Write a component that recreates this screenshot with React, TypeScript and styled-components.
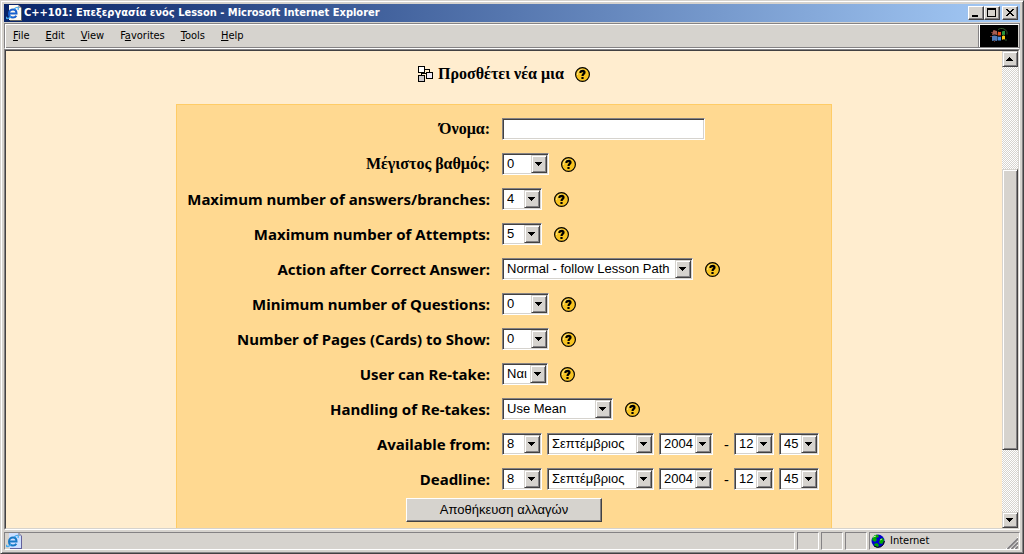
import React from 'react';
import styled, { createGlobalStyle, css } from 'styled-components';

const c = {
  face: '#d6d3ce',
  shadow: '#848284',
  dark: '#424142',
  page: '#ffedcf',
  form: '#ffd991',
  formBorder: '#ffcc66',
};

const uiFont = css`
  font-family: 'DejaVu Sans Condensed', 'DejaVu Sans', sans-serif;
  font-size: 11px;
  line-height: 14px;
`;

const raised = css`
  border: 1px solid;
  border-color: ${c.face} ${c.dark} ${c.dark} ${c.face};
  box-shadow: inset 1px 1px 0 #fff, inset -1px -1px 0 ${c.shadow};
  background: ${c.face};
`;

const sunken = css`
  border: 1px solid;
  border-color: ${c.shadow} #fff #fff ${c.shadow};
`;

const GlobalStyle = createGlobalStyle`
  *, *::before, *::after { box-sizing: border-box; }
  body { margin: 0; background: ${c.face}; color: #000; }
  button { color: #000; }
  svg { display: block; flex: none; }
`;

const Window = styled.div`
  display: flex;
  flex-direction: column;
  height: 100vh;
  padding: 3px;
  ${raised}
`;

const TitleBar = styled.header`
  ${uiFont}
  display: flex;
  align-items: center;
  height: 18px;
  padding: 0 2px;
  background: linear-gradient(to right, #082468, #a5cbf7);
  color: #fff;
`;

const Title = styled.h1`
  flex: 1;
  margin: 0 0 0 2px;
  font-size: 11px;
  font-weight: bold;
  white-space: nowrap;
  overflow: hidden;
`;

const WindowButton = styled.button<{ $apart?: boolean }>`
  ${raised}
  border-color: #fff ${c.dark} ${c.dark} #fff;
  box-shadow: inset -1px -1px 0 ${c.shadow};
  display: flex;
  width: 16px;
  height: 14px;
  padding: 0;
  margin-left: ${(p) => (p.$apart ? 2 : 0)}px;
`;

const MenuBar = styled.div`
  display: flex;
  height: 26px;
  margin-top: 1px;
  border: 1px solid;
  border-color: ${c.shadow} ${c.shadow} #fff ${c.shadow};
  box-shadow: inset 1px 1px 0 #fff, inset 0 -1px 0 ${c.shadow};
`;

const MenuItems = styled.nav`
  ${uiFont}
  display: flex;
  flex: 1;
  align-items: center;
`;

const MenuItem = styled.button`
  font: inherit;
  padding: 0 8px;
  border: 0;
  background: none;

  u { text-underline-offset: 1px; }
`;

const Throbber = styled.div`
  display: flex;
  align-items: center;
  justify-content: center;
  width: 39px;
  margin: 1px 1px 1px 0;
  border-left: 1px solid #fff;
  background: #000;
  box-shadow: -1px 0 0 ${c.shadow};
`;

const Viewport = styled.div`
  display: flex;
  flex: 1;
  min-height: 0;
  border: 1px solid;
  border-color: ${c.shadow} #fff #fff ${c.shadow};
`;

const ViewportInner = styled.div`
  display: flex;
  flex: 1;
  min-width: 0;
  border: 1px solid;
  border-color: ${c.dark} ${c.face} ${c.face} ${c.dark};
`;

const Page = styled.main`
  flex: 1;
  min-width: 0;
  overflow: hidden;
  background: ${c.page};
`;

const Heading = styled.h2`
  display: flex;
  align-items: center;
  justify-content: center;
  gap: 5px;
  margin: 0;
  padding: 13px 0 20px;
  font: bold 16px/20px 'Liberation Serif', serif;
`;

const HelpButton = styled.button<{ $gap: number }>`
  margin-left: ${(p) => p.$gap}px;
  padding: 0;
  border: 0;
  background: none;
`;

const Form = styled.form`
  width: 656px;
  max-width: 100%;
  margin: 0 auto;
  padding: 13px 0 20px;
  border: 1px solid ${c.formBorder};
  background: ${c.form};
`;

const Row = styled.div`
  display: grid;
  grid-template-columns: 313px 1fr;
  column-gap: 12px;
  align-items: center;
  height: 22px;
  margin-bottom: 13px;

  &:last-of-type { margin-bottom: 8px; }
`;

const RowLabel = styled.label<{ $serif?: boolean }>`
  text-align: right;
  white-space: nowrap;
  font: ${(p) =>
    p.$serif ? "bold 16px/20px 'Liberation Serif', serif" : "bold 15px/20px 'Noto Sans', sans-serif"};
`;

const Cell = styled.div`
  display: flex;
  align-items: center;
  font: 15px/20px 'Noto Sans', sans-serif;
`;

const field = css`
  display: block;
  height: 22px;
  border: 1px solid;
  border-color: ${c.shadow} #fff #fff ${c.shadow};
  box-shadow: inset 1px 1px 0 ${c.dark}, inset -1px -1px 0 ${c.face};
  background: #fff;
  color: #000;
  font: 13px/18px 'Liberation Sans', sans-serif;
`;

const TextInput = styled.input`
  ${field}
  width: 203px;
  padding: 0 4px;
`;

const SelectBox = styled.span<{ $width: number }>`
  position: relative;
  width: ${(p) => p.$width}px;
  height: 22px;

  & + & { margin-left: 5px; }
`;

const NativeSelect = styled.select`
  ${field}
  appearance: none;
  width: 100%;
  padding: 0 18px 0 4px;
  border-radius: 0;
`;

const Drop = styled.span`
  ${raised}
  position: absolute;
  top: 2px;
  right: 2px;
  display: flex;
  align-items: center;
  justify-content: center;
  width: 16px;
  height: 18px;
  padding-right: 1px;
  pointer-events: none;
`;

const Dash = styled.span`
  width: 21px;
  padding-left: 11px;
`;

const Save = styled.button`
  ${raised}
  border-color: #fff ${c.dark} ${c.dark} #fff;
  box-shadow: inset -1px -1px 0 ${c.shadow};
  display: block;
  width: 196px;
  height: 24px;
  margin: 0 auto;
  font: 13px/16px 'Liberation Sans', sans-serif;
`;

const ScrollBar = styled.div`
  display: flex;
  flex-direction: column;
  width: 16px;
  background: repeating-conic-gradient(#fff 0 25%, ${c.face} 0 50%) 0 0 / 2px 2px;
`;

const ScrollButton = styled.button`
  ${raised}
  display: flex;
  align-items: center;
  justify-content: center;
  height: 16px;
  padding: 0 1px 0 0;
`;

const Track = styled.div`
  display: flex;
  flex: 1;
  flex-direction: column;
`;

const TrackSpace = styled.div<{ $share: number }>`
  flex: ${(p) => p.$share} 0 0;
`;

const Thumb = styled.div`
  ${raised}
  flex: 281 0 0;
`;

const StatusBar = styled.footer`
  ${uiFont}
  display: flex;
  gap: 2px;
  height: 20px;
  padding-top: 2px;
`;

const StatusPanel = styled.div<{ $width?: number }>`
  ${sunken}
  display: flex;
  align-items: center;
  gap: 5px;
  flex: ${(p) => (p.$width ? `0 0 ${p.$width}px` : '1')};
  padding: 0 1px;
`;

const PanelText = styled.span`
  flex: 1;
`;

const Grip = styled.svg`
  align-self: flex-end;
`;

const PageIcon = ({ pale }: { pale?: boolean }) => (
  <svg width="16" height="16" viewBox="0 0 16 16" aria-hidden="true">
    <path d="M4 0h9l3 3v13H4z" fill={pale ? '#63619c' : '#636563'} />
    <path d="M3 0h9l3 3v12H3z" fill={pale ? '#cedfff' : '#fffbf0'} />
    <path d="M12 0v3h3z" fill="#9ca6b5" />
    <path
      d="M3 8.5h7.5C10.5 5.500 9 4.500 7 4.500S3 6 3 8.500s1.700 4 4 4c1.600 0 2.700-.7 3.300-1.800"
      fill="none"
      stroke={pale ? '#1879c6' : '#1861ce'}
      strokeWidth="2"
    />
    <path d="M1 12C-1 14 2 14.500 5 11.500M8 4c3-2.500 5-2.500 4 1" fill="none" stroke="#42aaef" strokeWidth="1.200" />
  </svg>
);

const FlagIcon = () => (
  <svg width="20" height="18" viewBox="0 0 20 18" aria-hidden="true">
    <path d="M2 5h2v1H2zM4 3h2v1H4zM1 9h2v1H1zM3 12h2v1H3zM5 14h1v1H5z" fill="#6b3029" />
    <path d="M4 4q2-1 4 0v4q-2-1-5 0z" fill="#a55d52" />
    <path d="M3 9q2-1 5 0v5q-3-1-5 0z" fill="#5279b5" />
    <path d="M9 4.500q2 1 3 .2v3.500q-2 .5-3.500 0z" fill="#e75118" />
    <path d="M13 4.500q2-1 3-.5v4q-1.500-.5-3 .2z" fill="#29963c" />
    <path d="M8.500 9.200q2 1 3.500 .2v4q-2 .5-3.500-.2z" fill="#4a8ade" />
    <path d="M13 9.200q1.500-1 3-.3v3.600q-1.500-.5-3 .3z" fill="#f7cb18" />
    <path d="M9 2.500q5-3 9 2v3M17 12v2" fill="none" stroke="#30552c" strokeWidth="1" />
  </svg>
);

const HelpIcon = () => (
  <svg width="15" height="15" viewBox="0 0 15 15" aria-hidden="true">
    <circle cx="7.500" cy="7.500" r="6.900" fill="#f7c321" stroke="#000" strokeWidth="1.200" />
    <path d="M2.500 8C2.500 4.500 4.500 2.500 8 2.500" fill="none" stroke="#ffe784" strokeWidth="1" />
    <path d="M5.500 6V5C5.500 3.500 9.500 3.500 9.500 5.400C9.500 7 7.500 6.800 7.500 9" fill="none" stroke="#000" strokeWidth="2.200" />
    <path d="M6.400 10h2.200v2H6.400z" />
  </svg>
);

const LessonIcon = () => (
  <svg width="15" height="16" viewBox="0 0 15 16" shapeRendering="crispEdges" aria-hidden="true">
    <path d="M7 3h5v3h-1V4H7zM3 7h1v2H3zM4 7h4v1H4z" />
    <path d="M0 0h7v7H0zM8 6h7v7H8zM0 9h7v7H0z" />
    <path d="M1 1h5v5H1z" fill="#fff" />
    <path d="M9 7h5v5H9z" fill="#efebf7" />
    <path d="M1 10h5v5H1z" fill="#cecbce" />
  </svg>
);

const GlobeIcon = () => (
  <svg width="14" height="14" viewBox="0 0 14 14" aria-hidden="true">
    <circle cx="7" cy="7" r="6.500" fill="#0000ce" />
    <path d="M2 3Q4 0 7 1L8 3L5 4L6 6L4 8L1 6zM9 5l3-1 1 3-2 3-3-1zM3 10l3-1 2 2-1 2-3-1z" fill="#00aa00" />
    <path d="M2 3l3-1M9 6l2-1" stroke="#b5f7a5" />
    <path d="M13.400 7A6.400 6.400 0 0 1 3 12" fill="none" stroke="#000" />
  </svg>
);

const Arrow = ({ up }: { up?: boolean }) => (
  <svg width="7" height="4" viewBox="0 0 7 4" shapeRendering="crispEdges" aria-hidden="true">
    <path d={up ? 'M3 0h1v1h1v1h1v1h1v1H0V3h1V2h1V1h1z' : 'M0 0h7v1H6v1H5v1H4v1H3V3H2V2H1V1H0z'} />
  </svg>
);

const CaptionGlyph = ({ d }: { d: string }) => (
  <svg width="14" height="12" viewBox="0 0 14 12" shapeRendering="crispEdges" aria-hidden="true">
    <path d={d} fillRule="evenodd" />
  </svg>
);

interface SelectProps {
  id?: string;
  label?: string;
  value: string;
  width: number;
}

const Select = ({ id, label, value, width }: SelectProps) => (
  <SelectBox $width={width}>
    <NativeSelect id={id} aria-label={label} defaultValue={value}>
      <option>{value}</option>
    </NativeSelect>
    <Drop>
      <Arrow />
    </Drop>
  </SelectBox>
);

const Help = ({ gap = 12 }: { gap?: number }) => (
  <HelpButton type="button" aria-label="Help" $gap={gap}>
    <HelpIcon />
  </HelpButton>
);

const menus: [string, string, string][] = [
  ['', 'F', 'ile'],
  ['', 'E', 'dit'],
  ['', 'V', 'iew'],
  ['F', 'a', 'vorites'],
  ['', 'T', 'ools'],
  ['', 'H', 'elp'],
];

const settings = [
  { id: 'grade', label: 'Μέγιστος βαθμός:', value: '0', width: 47, serif: true },
  { id: 'answers', label: 'Maximum number of answers/branches:', value: '4', width: 40 },
  { id: 'attempts', label: 'Maximum number of Attempts:', value: '5', width: 40 },
  { id: 'action', label: 'Action after Correct Answer:', value: 'Normal - follow Lesson Path', width: 191 },
  { id: 'questions', label: 'Minimum number of Questions:', value: '0', width: 47 },
  { id: 'pages', label: 'Number of Pages (Cards) to Show:', value: '0', width: 47 },
  { id: 'retake', label: 'User can Re-take:', value: 'Ναι', width: 46 },
  { id: 'handling', label: 'Handling of Re-takes:', value: 'Use Mean', width: 111 },
];

const dates = [
  { id: 'available', label: 'Available from:' },
  { id: 'deadline', label: 'Deadline:' },
];

export default function App() {
  return (
    <>
      <GlobalStyle />
      <Window>
        <TitleBar>
          <PageIcon />
          <Title>C++101: Επεξεργασία ενός Lesson - Microsoft Internet Explorer</Title>
          <WindowButton aria-label="Minimize">
            <CaptionGlyph d="M3 8h6v2H3z" />
          </WindowButton>
          <WindowButton aria-label="Maximize">
            <CaptionGlyph d="M2 1h9v9H2zM3 3v6h7V3z" />
          </WindowButton>
          <WindowButton aria-label="Close" $apart>
            <CaptionGlyph d="M3 2h2v1h1v1h2V3h1V2h2v1h-1v1H9v1H8v1h1v1h1v1h1v1H9V8H8V7H6v1H5v1H3V8h1V7h1V6h1V5H5V4H4V3H3z" />
          </WindowButton>
        </TitleBar>
        <MenuBar>
          <MenuItems>
            {menus.map(([before, key, after]) => (
              <MenuItem key={key} type="button">
                {before}
                <u>{key}</u>
                {after}
              </MenuItem>
            ))}
          </MenuItems>
          <Throbber>
            <FlagIcon />
          </Throbber>
        </MenuBar>
        <Viewport>
          <ViewportInner>
            <Page>
              <Heading>
                <LessonIcon />
                Προσθέτει νέα μια
                <Help gap={6} />
              </Heading>
              <Form>
                <Row>
                  <RowLabel $serif htmlFor="name">
                    Όνομα:
                  </RowLabel>
                  <Cell>
                    <TextInput id="name" type="text" />
                  </Cell>
                </Row>
                {settings.map((s) => (
                  <Row key={s.id}>
                    <RowLabel $serif={s.serif} htmlFor={s.id}>
                      {s.label}
                    </RowLabel>
                    <Cell>
                      <Select id={s.id} value={s.value} width={s.width} />
                      <Help />
                    </Cell>
                  </Row>
                ))}
                {dates.map((d) => (
                  <Row key={d.id}>
                    <RowLabel htmlFor={d.id}>{d.label}</RowLabel>
                    <Cell>
                      <Select id={d.id} value="8" width={40} />
                      <Select label="Month" value="Σεπτέμβριος" width={107} />
                      <Select label="Year" value="2004" width={54} />
                      <Dash>-</Dash>
                      <Select label="Hour" value="12" width={40} />
                      <Select label="Minute" value="45" width={40} />
                    </Cell>
                  </Row>
                ))}
                <Save type="button">Αποθήκευση αλλαγών</Save>
              </Form>
            </Page>
            <ScrollBar>
              <ScrollButton aria-label="Scroll up">
                <Arrow up />
              </ScrollButton>
              <Track>
                <TrackSpace $share={102} />
                <Thumb />
                <TrackSpace $share={62} />
              </Track>
              <ScrollButton aria-label="Scroll down">
                <Arrow />
              </ScrollButton>
            </ScrollBar>
          </ViewportInner>
        </Viewport>
        <StatusBar>
          <StatusPanel>
            <PageIcon pale />
          </StatusPanel>
          <StatusPanel $width={22} />
          <StatusPanel $width={22} />
          <StatusPanel $width={22} />
          <StatusPanel $width={151}>
            <GlobeIcon />
            <PanelText>Internet</PanelText>
            <Grip width="12" height="12" viewBox="0 0 12 12" aria-hidden="true">
              <path d="M0 12L12 0M4 12l8-8M8 12l4-4" stroke="#fff" />
              <path d="M1.500 12L12 1.500M5.500 12L12 5.500M9.500 12L12 9.500" stroke={c.shadow} strokeWidth="2" />
            </Grip>
          </StatusPanel>
        </StatusBar>
      </Window>
    </>
  );
}
